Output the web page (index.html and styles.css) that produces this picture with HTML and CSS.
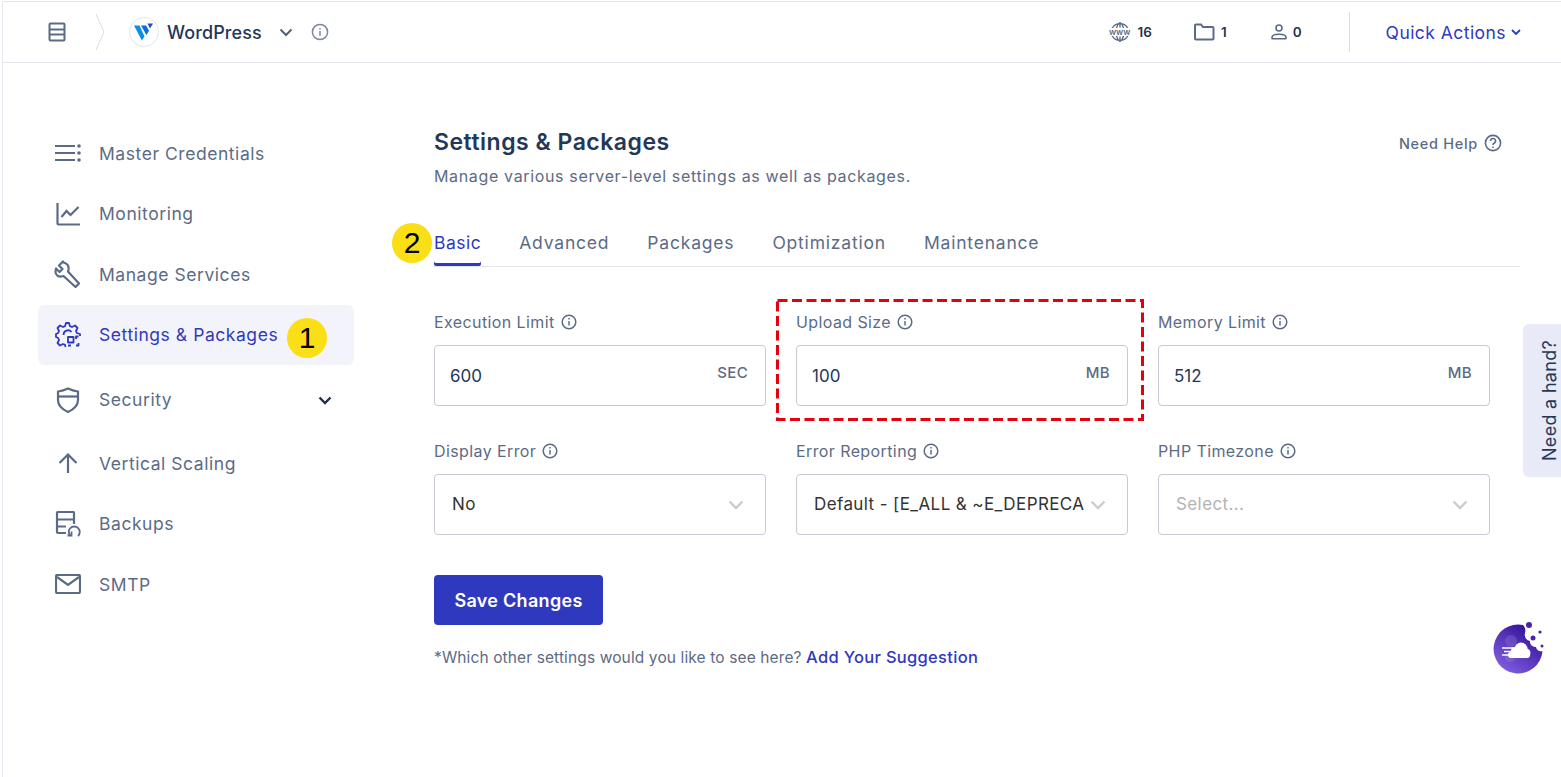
FILE: index.html
```html
<!DOCTYPE html>
<html lang="en">
<head>
    <meta charset="UTF-8">
    <meta name="viewport" content="width=device-width, initial-scale=1.0">
    <title>Settings &amp; Packages</title>
    <link rel="stylesheet" href="styles.css">
</head>
<body>
    <div class="app">
        <header class="topbar">
            <div class="topbar-left">
                <svg class="server-icon" width="18" height="20" viewBox="0 0 18 20" fill="none" stroke="#5c6b85" stroke-width="2"><rect x="1.5" y="1.5" width="15" height="17" rx="1"/><path d="M1.5 7.5h15M1.5 12.5h15"/></svg>
                <svg class="crumb-sep" width="10" height="38" viewBox="0 0 10 38" fill="none" stroke="#dcdde3" stroke-width="1"><path d="M1 1l8 18-8 18"/></svg>
                <span class="app-logo">
                    <svg width="20" height="18" viewBox="0 0 20 18"><path d="M0 2.500h5.500l5 11-2.600 4z" fill="#0a8fe8"/><path d="M7 2.500h5l3 5.200-2.600 4.300z" fill="#0a6fd8"/><path d="M13.500 0.500H19l-3 5z" fill="#1a4fd0"/></svg>
                </span>
                <span class="app-name">WordPress</span>
                <svg class="app-caret" width="14" height="9" viewBox="0 0 14 9" fill="none" stroke="#55617a" stroke-width="2"><path d="M1.500 1.500L7 7l5.500-5.500"/></svg>
                <svg width="18" height="18" viewBox="0 0 18 18" fill="none" stroke="#7d889c" stroke-width="1.500"><circle cx="9" cy="9" r="7.600"/><path d="M9 8v5M9 5v1.600"/></svg>
            </div>
            <div class="topbar-right">
                <div class="stat stat-www">
                    <svg width="22" height="22" viewBox="0 0 22 22" fill="none" stroke="#5c6b85" stroke-width="1.400"><path d="M3 7.500a9 9 0 0 1 16 0M3 14.500a9 9 0 0 0 16 0M11 1.500v5M11 15.500v5M7.500 7c.5-2.500 1.800-4.500 3.500-5.500 1.700 1 3 3 3.500 5.500M7.500 15c.5 2.500 1.800 4.500 3.500 5.500 1.700-1 3-3 3.500-5.500"/></svg>
                    <span class="www-label">www</span>
                    <span>16</span>
                </div>
                <div class="stat stat-folder">
                    <svg width="21" height="18" viewBox="0 0 21 18" fill="none" stroke="#5c6b85" stroke-width="2"><path d="M1 15.500V2.500a1 1 0 0 1 1-1h5l2 2.500h9.500a1 1 0 0 1 1 1v10.500a1 1 0 0 1-1 1H2a1 1 0 0 1-1-1z"/></svg>
                    <span>1</span>
                </div>
                <div class="stat stat-user">
                    <svg width="16" height="16" viewBox="0 0 16 16" fill="none" stroke="#5c6b85" stroke-width="1.600"><circle cx="8" cy="4" r="3"/><path d="M1 14.200v-1c0-1.800 2.500-3 7-3s7 1.200 7 3v1a.6.6 0 0 1-.6.6H1.600a.6.6 0 0 1-.6-.6z"/></svg>
                    <span>0</span>
                </div>
                <div class="quick-actions">
                    <span>Quick Actions</span>
                    <svg width="10" height="7" viewBox="0 0 10 7" fill="none" stroke="#2f39bf" stroke-width="1.800"><path d="M1 1l4 4 4-4"/></svg>
                </div>
            </div>
        </header>

        <div class="layout">
            <nav class="sidebar">
                <a class="nav-item">
                    <svg class="nav-icon" width="28" height="20" viewBox="0 0 28 20" fill="none" stroke="#5c6b85" stroke-width="2.200"><path d="M1 3h20M1 10h20M1 17h20"/><circle cx="25" cy="3" r="1.800" fill="#5c6b85" stroke="none"/><circle cx="25" cy="10" r="1.800" fill="#5c6b85" stroke="none"/><circle cx="25" cy="17" r="1.800" fill="#5c6b85" stroke="none"/></svg>
                    <span>Master Credentials</span>
                </a>
                <a class="nav-item">
                    <svg class="nav-icon" width="24" height="24" viewBox="0 0 24 24" fill="none" stroke="#5c6b85" stroke-width="2.200"><path d="M1.500 1v20.500a1 1 0 0 0 1 1H24"/><path d="M5.500 15l5-6 4 4 8-8"/></svg>
                    <span>Monitoring</span>
                </a>
                <a class="nav-item">
                    <svg class="nav-icon" width="28" height="28" viewBox="0 0 28 28" fill="none" stroke="#5c6b85" stroke-width="2.200" stroke-linejoin="round"><path d="M9 1.500L5 5.500l3.500 3.500-3 3-3.500-3.500-.5 3.500c0 3 3 5 6 4.500l2-.5 12 11 3.500-3.500-11-12 .5-2c.5-3-1-6-5-7z"/></svg>
                    <span>Manage Services</span>
                </a>
                <a class="nav-item active">
                    <svg class="nav-icon" width="26" height="26" viewBox="0 0 26 26" fill="none" stroke="#2f39bf" stroke-width="1.800" stroke-linejoin="round"><path d="M25 14V12l-3.200-1-.8-2 1.500-3-2.500-2.500-3 1.500-2-.8L14 1h-3l-1 3.200-2 .8-3-1.500L2.500 6 4 9l-.8 2L1 12v3l2.200 1 .8 2-1.500 3L5 23.500 8 22l2 .8.500 2.200"/><path d="M8.500 13a4.500 4.500 0 0 1 8-3"/><rect x="13" y="15" width="5.500" height="5.500"/><path d="M21 17v-2.500h2.500M21 23.500h2.500V21M13 23.500h3"/></svg>
                    <span>Settings &amp; Packages</span>
                    <span class="badge badge-nav">1</span>
                </a>
                <a class="nav-item nav-security">
                    <svg class="nav-icon" width="24" height="26" viewBox="0 0 24 26" fill="none" stroke="#5c6b85" stroke-width="2.200" stroke-linejoin="round"><path d="M2 4.500C6 4 9 3 12 1.500 15 3 18 4 22 4.500V13c0 6-4.500 9.500-10 12C6.500 22.500 2 19 2 13z"/><path d="M2 9.500h20"/></svg>
                    <span>Security</span>
                    <svg class="nav-caret" width="14" height="9" viewBox="0 0 14 9" fill="none" stroke="#1f2f50" stroke-width="2.400"><path d="M1.500 1.500L7 7l5.500-5.500"/></svg>
                </a>
                <a class="nav-item nav-scaling">
                    <svg class="nav-icon" width="20" height="20" viewBox="0 0 20 20" fill="none" stroke="#5c6b85" stroke-width="2.200"><path d="M10 20V2M1.500 10L10 1.500 18.500 10"/></svg>
                    <span>Vertical Scaling</span>
                </a>
                <a class="nav-item">
                    <svg class="nav-icon" width="26" height="26" viewBox="0 0 26 26" fill="none" stroke="#5c6b85" stroke-width="2.200"><path d="M11 22H3a1 1 0 0 1-1-1V2a1 1 0 0 1 1-1h15a1 1 0 0 1 1 1v11"/><path d="M2 8.500h17M2 15.500h9"/><path d="M15.500 25a5.500 5.500 0 1 1 7.500 0M16.500 20.500v4h-4" stroke-width="1.800"/></svg>
                    <span>Backups</span>
                </a>
                <a class="nav-item">
                    <svg class="nav-icon" width="26" height="20" viewBox="0 0 26 20" fill="none" stroke="#5c6b85" stroke-width="2.200"><rect x="1" y="1" width="24" height="18" rx="1.500"/><path d="M2 3l11 8 11-8"/></svg>
                    <span>SMTP</span>
                </a>
            </nav>

            <main class="content">
                <div class="page-head">
                    <div>
                        <h1>Settings &amp; Packages</h1>
                        <p class="subtitle">Manage various server-level settings as well as packages.</p>
                    </div>
                    <div class="need-help">
                        <span>Need Help</span>
                        <svg width="18" height="18" viewBox="0 0 18 18" fill="none" stroke="#5c6b85" stroke-width="1.600"><circle cx="9" cy="9" r="7.600"/><path d="M6.500 7a2.500 2.500 0 1 1 3.500 2.300c-.7.300-1 .8-1 1.700M9 12.500v1.500"/></svg>
                    </div>
                </div>

                <div class="tabs">
                    <a class="tab active">Basic<span class="badge badge-tab">2</span></a>
                    <a class="tab">Advanced</a>
                    <a class="tab">Packages</a>
                    <a class="tab">Optimization</a>
                    <a class="tab">Maintenance</a>
                </div>

                <div class="form-grid">
                    <div class="field">
                        <label>Execution Limit <svg width="16" height="16" viewBox="0 0 16 16" fill="none" stroke="#5c6b85" stroke-width="1.500"><circle cx="8" cy="8" r="6.800"/><path d="M8 7v4.500M8 4v1.600"/></svg></label>
                        <div class="input"><span class="value">600</span><span class="unit">SEC</span></div>
                    </div>
                    <div class="field">
                        <label>Upload Size <svg width="16" height="16" viewBox="0 0 16 16" fill="none" stroke="#5c6b85" stroke-width="1.500"><circle cx="8" cy="8" r="6.800"/><path d="M8 7v4.500M8 4v1.600"/></svg></label>
                        <div class="input"><span class="value">100</span><span class="unit">MB</span></div>
                        <svg class="highlight" width="368" height="122" viewBox="0 0 368 122" fill="none" stroke="#e3000f" stroke-width="3" stroke-dasharray="10 4.500"><rect x="1.500" y="1.500" width="365" height="119"/></svg>
                    </div>
                    <div class="field">
                        <label>Memory Limit <svg width="16" height="16" viewBox="0 0 16 16" fill="none" stroke="#5c6b85" stroke-width="1.500"><circle cx="8" cy="8" r="6.800"/><path d="M8 7v4.500M8 4v1.600"/></svg></label>
                        <div class="input"><span class="value">512</span><span class="unit">MB</span></div>
                    </div>
                    <div class="field">
                        <label>Display Error <svg width="16" height="16" viewBox="0 0 16 16" fill="none" stroke="#5c6b85" stroke-width="1.500"><circle cx="8" cy="8" r="6.800"/><path d="M8 7v4.500M8 4v1.600"/></svg></label>
                        <div class="input select"><span class="select-value">No</span><svg width="16" height="10" viewBox="0 0 16 10" fill="none" stroke="#cccccc" stroke-width="2.400"><path d="M1.500 1.500L8 8l6.500-6.500"/></svg></div>
                    </div>
                    <div class="field">
                        <label>Error Reporting <svg width="16" height="16" viewBox="0 0 16 16" fill="none" stroke="#5c6b85" stroke-width="1.500"><circle cx="8" cy="8" r="6.800"/><path d="M8 7v4.500M8 4v1.600"/></svg></label>
                        <div class="input select"><span class="select-value">Default - [E_ALL &amp; ~E_DEPRECA</span><svg width="16" height="10" viewBox="0 0 16 10" fill="none" stroke="#cccccc" stroke-width="2.400"><path d="M1.500 1.500L8 8l6.500-6.500"/></svg></div>
                    </div>
                    <div class="field">
                        <label>PHP Timezone <svg width="16" height="16" viewBox="0 0 16 16" fill="none" stroke="#5c6b85" stroke-width="1.500"><circle cx="8" cy="8" r="6.800"/><path d="M8 7v4.500M8 4v1.600"/></svg></label>
                        <div class="input select"><span class="select-value placeholder">Select...</span><svg width="16" height="10" viewBox="0 0 16 10" fill="none" stroke="#cccccc" stroke-width="2.400"><path d="M1.500 1.500L8 8l6.500-6.500"/></svg></div>
                    </div>
                </div>

                <button class="save-btn">Save Changes</button>
                <p class="suggestion">*Which other settings would you like to see here? <a>Add Your Suggestion</a></p>
            </main>
        </div>
    </div>

    <div class="hand-tab"><span>Need a hand?</span></div>

    <svg class="cloud-bot" width="52" height="54" viewBox="0 0 52 54">
        <defs>
            <linearGradient id="botFill" x1="0.800" y1="0.100" x2="0.200" y2="0.900">
                <stop offset="0" stop-color="#34109a"/>
                <stop offset="1" stop-color="#7d5bdc"/>
            </linearGradient>
        </defs>
        <path d="M30 4A24.500 24.500 0 1 0 49.500 30C46 31 43.500 29 43 26 39 26 36.500 23 37 20 33 19 31 16 32 12 33 9 32 6 30 4z" fill="url(#botFill)"/>
        <circle cx="18" cy="20" r="6" fill="#fff" opacity="0.12"/>
        <circle cx="17" cy="36" r="5" fill="#fff" opacity="0.12"/>
        <circle cx="36" cy="4" r="3" fill="#4a22b0"/>
        <circle cx="47" cy="11" r="1.600" fill="#4a22b0"/>
        <circle cx="40" cy="17" r="2.500" fill="#4a22b0"/>
        <circle cx="49" cy="25" r="1.500" fill="#4a22b0"/>
        <g fill="#fff">
            <rect x="15" y="31" width="22" height="6" rx="3"/>
            <circle cx="22" cy="30" r="4"/>
            <circle cx="28" cy="28" r="6.500"/>
            <circle cx="33" cy="32" r="4.500"/>
        </g>
        <path d="M9 27h12M11 30.500h8M9 34h10" stroke="#fff" stroke-width="1.300"/>
    </svg>
</body>
</html>
```

FILE: styles.css
```css
* {
    box-sizing: border-box;
}
html, body {
    margin: 0;
    height: 100%;
    overflow: hidden;
}
body {
    font-family: Inter, "Open Sans", sans-serif;
    background-color: #ffffff;
    color: #5c6b85;
}
.app {
    margin: 1px 0 0 2px;
    height: 776px;
    border-top: 1px solid #e6e6ee;
    border-left: 1px solid #e6e6ee;
}

/* top bar */
.topbar {
    height: 61px;
    border-bottom: 1px solid #e4e4ec;
    display: flex;
    justify-content: space-between;
    align-items: center;
    padding: 0 40px 0 45px;
}
.topbar-left {
    display: flex;
    align-items: center;
}
.crumb-sep {
    margin-left: 29px;
}
.app-logo {
    width: 30px;
    height: 30px;
    margin-left: 24px;
    border: 1px solid #e2e4ea;
    border-radius: 50%;
    display: flex;
    align-items: center;
    justify-content: center;
}
.app-name {
    margin-left: 8px;
    font-size: 18px;
    letter-spacing: 0.1px;
    font-weight: 500;
    color: #243757;
}
.app-caret {
    margin: 0 18px 0 17px;
}
.topbar-right {
    display: flex;
    align-items: center;
    height: 100%;
}
.stat {
    display: flex;
    align-items: center;
    font-size: 13.5px;
    font-weight: 600;
    color: #27344d;
    gap: 6px;
    position: relative;
}
.stat-www {
    gap: 7px;
}
.stat-folder {
    margin-left: 42px;
}
.stat-user {
    margin-left: 44px;
}
.www-label {
    position: absolute;
    left: 0;
    top: 50%;
    width: 22px;
    text-align: center;
    transform: translateY(-50%);
    background: #fff;
    font-size: 8.500px;
    line-height: 8px;
    font-weight: 600;
    color: #5c6b85;
}
.quick-actions {
    margin-left: 47px;
    height: 40px;
    padding-left: 36px;
    border-left: 1px solid #dcdde3;
    display: flex;
    align-items: center;
    gap: 5px;
    font-size: 17.5px;
    letter-spacing: 0.45px;
    color: #2f39bf;
}

/* sidebar */
.layout {
    display: flex;
}
.sidebar {
    width: 316px;
    margin: 60px 0 0 35px;
    flex-shrink: 0;
}
.nav-item {
    height: 60.5px;
    padding-left: 16px;
    border-radius: 6px;
    display: grid;
    grid-template-columns: 28px auto;
    column-gap: 17px;
    justify-content: start;
    align-items: center;
    position: relative;
    font-size: 17.5px;
    letter-spacing: 0.55px;
    color: #5c6b85;
}
.nav-icon {
    justify-self: center;
}
.nav-item.active {
    height: 60px;
    background-color: #f3f4fb;
    color: #2f39bf;
}
.nav-security {
    margin-top: 5px;
}
.nav-scaling {
    margin-top: 3px;
}
.nav-caret {
    position: absolute;
    right: 22px;
    top: 26px;
}

/* annotation circles */
.badge {
    position: absolute;
    width: 40px;
    height: 40px;
    border-radius: 50%;
    background-color: #fade16;
    color: #000;
    font-family: "Liberation Sans", Arial, sans-serif;
    font-size: 30px;
    font-weight: 400;
    letter-spacing: 0;
    line-height: 40px;
    text-align: center;
}
.badge-nav {
    left: 249px;
    top: 13px;
}
.badge-tab {
    left: -42px;
    top: -7px;
}

/* main content */
.content {
    margin-left: 80px;
    width: 1086px;
    padding-top: 61px;
}
.page-head {
    display: flex;
    justify-content: space-between;
    align-items: flex-start;
}
h1 {
    margin: 0;
    font-size: 23px;
    letter-spacing: 0.5px;
    line-height: 36px;
    font-weight: 600;
    color: #243757;
}
.subtitle {
    margin: 4px 0 0;
    font-size: 16px;
    letter-spacing: 0.65px;
    line-height: 24px;
}
.need-help {
    display: flex;
    align-items: center;
    gap: 6px;
    margin: 10px 18px 0 0;
    font-size: 14.5px;
    letter-spacing: 0.7px;
    font-weight: 500;
}
.tabs {
    display: flex;
    gap: 38px;
    margin-top: 42px;
    border-bottom: 1px solid #e4e4ec;
}
.tab {
    position: relative;
    padding-bottom: 10px;
    font-size: 17.5px;
    letter-spacing: 0.8px;
    line-height: 26px;
    color: #5c6b85;
}
.tab.active {
    color: #2f39bf;
    letter-spacing: 0.5px;
    box-shadow: inset 0 -3px 0 #2f39bf;
    border-radius: 0 0 2px 2px;
}
.form-grid {
    display: grid;
    grid-template-columns: repeat(3, 332px);
    column-gap: 30px;
    row-gap: 33px;
    margin-top: 43px;
}
.field {
    position: relative;
}
label {
    display: flex;
    align-items: center;
    gap: 6px;
    height: 24px;
    margin-bottom: 11px;
    font-size: 16px;
    letter-spacing: 0.4px;
}
.input {
    height: 61px;
    border: 1px solid #c5cad6;
    border-radius: 4px;
    padding: 0 17px 0 15px;
    display: flex;
    justify-content: space-between;
    align-items: center;
}
.value {
    font-size: 17px;
    color: #243757;
}
.unit {
    font-size: 15px;
    letter-spacing: 0.3px;
    font-weight: 500;
    padding-bottom: 6px;
}
.select {
    padding: 0 21px 0 17px;
    gap: 6px;
}
.select-value {
    font-size: 17px;
    letter-spacing: 0.4px;
    color: #333333;
    white-space: nowrap;
    padding-bottom: 2px;
}
.select svg {
    flex-shrink: 0;
}
.placeholder {
    color: #b3b3b3;
}
.highlight {
    position: absolute;
    left: -20px;
    top: -11px;
    pointer-events: none;
}
.save-btn {
    display: block;
    width: 169px;
    height: 50px;
    margin-top: 40px;
    border: none;
    border-radius: 4px;
    background-color: #2f39bf;
    color: #ffffff;
    font-family: inherit;
    font-size: 18px;
    letter-spacing: 0.3px;
    font-weight: 600;
}
.suggestion {
    margin: 20px 0 0;
    font-size: 15.5px;
    letter-spacing: 0.12px;
    line-height: 24px;
}
.suggestion a {
    color: #2f39bf;
    font-size: 16.5px;
    letter-spacing: 0.3px;
    font-weight: 500;
}

/* floating stuff */
.hand-tab {
    position: fixed;
    right: 0;
    top: 324px;
    width: 38px;
    height: 153px;
    padding-right: 1px;
    background-color: #e8eaf7;
    border-radius: 6px 0 0 6px;
    display: flex;
    align-items: center;
    justify-content: flex-end;
}
.hand-tab span {
    writing-mode: vertical-rl;
    transform: rotate(180deg);
    font-size: 18px;
    letter-spacing: 0.3px;
    color: #243757;
}
.cloud-bot {
    position: fixed;
    left: 1493px;
    top: 621px;
}
```
